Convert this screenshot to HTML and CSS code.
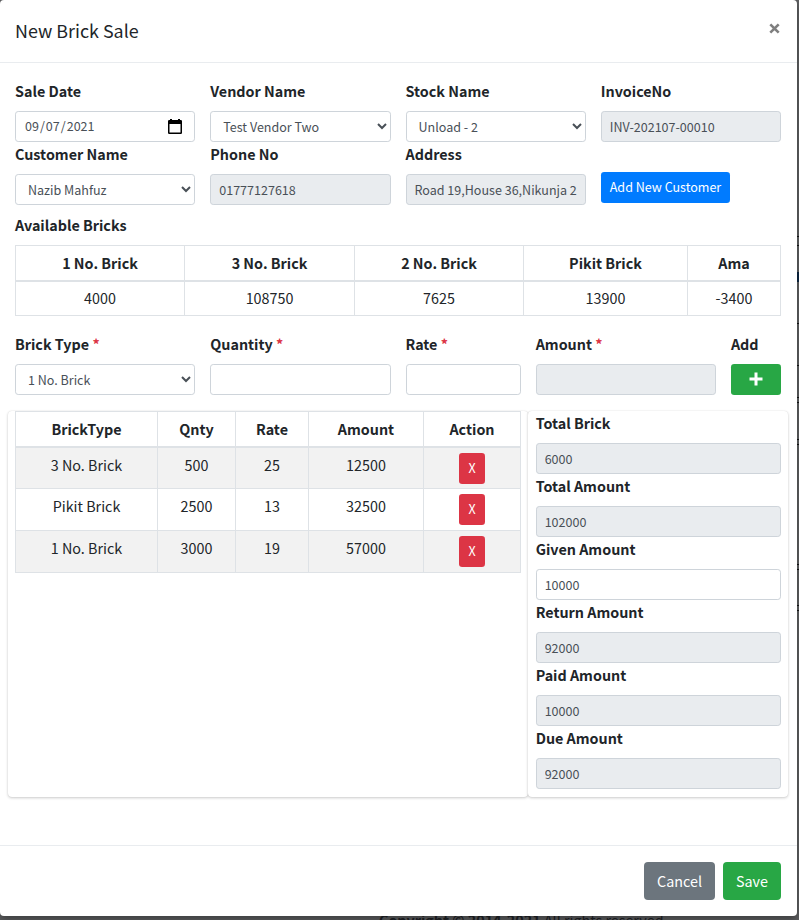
FILE: index.html
```html
<!DOCTYPE html>
<html lang="en">
<head>
<meta charset="utf-8">
<title>New Brick Sale</title>
<link rel="stylesheet" href="styles.css">
</head>
<body>
<div class="page-footer"><b>Copyright © 2014-2021</b> All rights reserved.</div>
<div class="modal">
  <header class="modal-header">
    <h4>New Brick Sale</h4>
    <button class="close" aria-label="Close"><svg width="11" height="11" viewBox="0 0 11 11"><path d="M1.3 1.3l8.4 8.4M9.7 1.3l-8.4 8.4"/></svg></button>
  </header>
  <main class="modal-body">
    <div class="row">
      <div class="c3"><label>Sale Date</label><div class="date-wrap"><input class="field date" type="date" value="2021-09-07"><svg width="14" height="15" viewBox="0 0 14 15"><path d="M0 2.2Q0 1 1.2 1H2V0h2v1h6V0h2v1h.8Q14 1 14 2.2v11.6Q14 15 12.8 15H1.2Q0 15 0 13.8zM1.5 5v8.5h11V5z" fill-rule="evenodd"/></svg></div></div>
      <div class="c3"><label>Vendor Name</label><select class="field"><option>Test Vendor Two</option></select></div>
      <div class="c3"><label>Stock Name</label><select class="field"><option>Unload - 2</option></select></div>
      <div class="c3"><label>InvoiceNo</label><input class="field" readonly value="INV-202107-00010"></div>
    </div>
    <div class="row">
      <div class="c3"><label>Customer Name</label><select class="field"><option>Nazib Mahfuz</option></select></div>
      <div class="c3"><label>Phone No</label><input class="field" readonly value="01777127618"></div>
      <div class="c3"><label>Address</label><input class="field" readonly value="Road 19,House 36,Nikunja 2"></div>
      <div class="c3"><button class="btn sm primary">Add New Customer</button></div>
    </div>
    <section class="available">
      <label>Available Bricks</label>
      <table class="stock">
        <colgroup><col class="w169"><col class="w170"><col class="w169"><col class="w164"><col></colgroup>
        <thead><tr><th>1 No. Brick</th><th>3 No. Brick</th><th>2 No. Brick</th><th>Pikit Brick</th><th>Ama</th></tr></thead>
        <tbody><tr><td>4000</td><td>108750</td><td>7625</td><td>13900</td><td>-3400</td></tr></tbody>
      </table>
    </section>
    <div class="row entry">
      <div class="c3"><label>Brick Type <i>*</i></label><select class="field"><option>1 No. Brick</option></select></div>
      <div class="c3"><label>Quantity <i>*</i></label><input class="field"></div>
      <div class="c2"><label>Rate <i>*</i></label><input class="field"></div>
      <div class="c3"><label>Amount <i>*</i></label><input class="field" readonly></div>
      <div class="c1"><label>Add</label><button class="btn sm success add" aria-label="Add"><svg width="14" height="14" viewBox="0 0 14 14"><path d="M7 .5v13M.5 7h13"/></svg></button></div>
    </div>
    <div class="row panels">
      <div class="card items">
        <table class="lines">
          <colgroup><col class="w142"><col class="w78"><col class="w73"><col class="w115"><col></colgroup>
          <thead><tr><th>BrickType</th><th>Qnty</th><th>Rate</th><th>Amount</th><th>Action</th></tr></thead>
          <tbody>
            <tr><td>3 No. Brick</td><td>500</td><td>25</td><td>12500</td><td class="act"><button class="btn sm danger">X</button></td></tr>
            <tr><td>Pikit Brick</td><td>2500</td><td>13</td><td>32500</td><td class="act"><button class="btn sm danger">X</button></td></tr>
            <tr><td>1 No. Brick</td><td>3000</td><td>19</td><td>57000</td><td class="act"><button class="btn sm danger">X</button></td></tr>
          </tbody>
        </table>
      </div>
      <div class="card totals">
        <label>Total Brick</label><input class="field" readonly value="6000">
        <label>Total Amount</label><input class="field" readonly value="102000">
        <label>Given Amount</label><input class="field" value="10000">
        <label>Return Amount</label><input class="field" readonly value="92000">
        <label>Paid Amount</label><input class="field" readonly value="10000">
        <label>Due Amount</label><input class="field" readonly value="92000">
      </div>
    </div>
  </main>
  <footer class="modal-footer">
    <button class="btn secondary">Cancel</button>
    <button class="btn success">Save</button>
  </footer>
</div>
</body>
</html>
```
FILE: styles.css
```css
* { box-sizing: border-box; }
body {
  margin: 0;
  height: 920px;
  overflow: hidden;
  position: relative;
  background:
    linear-gradient(#121314, #121314) 0 236px / 100% 1px no-repeat,
    linear-gradient(#121314, #121314) 0 245px / 100% 1px no-repeat,
    linear-gradient(#0b2540, #0b2540) 0 272px / 100% 10px no-repeat,
    linear-gradient(#121314, #121314) 0 323px / 100% 1px no-repeat,
    linear-gradient(#121314, #121314) 0 365px / 100% 1px no-repeat,
    linear-gradient(#121314, #121314) 0 397px / 100% 1px no-repeat,
    linear-gradient(#121314, #121314) 0 402px / 100% 1px no-repeat,
    linear-gradient(#121314, #121314) 0 439px / 100% 1px no-repeat,
    linear-gradient(#121314, #121314) 0 444px / 100% 1px no-repeat,
    linear-gradient(#121314, #121314) 0 564px / 100% 1px no-repeat,
    linear-gradient(#121314, #121314) 0 569px / 100% 1px no-repeat,
    linear-gradient(#121314, #121314) 0 605px / 100% 1px no-repeat,
    linear-gradient(#121314, #121314) 0 610px / 100% 1px no-repeat,
    #5e5f61;
  color: #212529;
  font: 14.33px/24px "Noto Sans CJK SC", "Noto Sans", sans-serif;
}
.page-footer {
  position: absolute;
  left: 379px;
  top: 908px;
  white-space: nowrap;
  color: #212327;
}
.modal {
  position: relative;
  width: 797px;
  height: 916px;
  background: #fff;
  border-radius: 4px;
  box-shadow: 0 4px 8px rgba(0, 0, 0, .35);
  display: flex;
  flex-direction: column;
}
.modal-header {
  height: 63px;
  padding: 15px 15px 16px;
  border-bottom: 1px solid #e9ecef;
  display: flex;
  justify-content: space-between;
}
h4 { margin: 0; font-size: 17.9px; font-weight: 400; line-height: 30px; }
.close {
  border: 0;
  padding: 0;
  background: none;
  width: 11px;
  height: 11px;
  margin: 8px 2px 0 0;
}
.close svg, .add svg { display: block; }
.close path { stroke: #7f7f7f; stroke-width: 2.6; }
.modal-body { padding: 16px 16px 0 15px; flex: 1; }
.row { display: flex; margin: 0 -7.5px; }
.c3 { width: 25%; padding: 0 7.5px; }
.c2 { width: 16.6667%; padding: 0 7.5px; }
.c1 { width: 8.3333%; padding: 0 7.5px; }
label { display: block; height: 24px; margin-bottom: 8px; font-weight: 700; white-space: nowrap; }
label i { color: #dc3545; font-style: normal; }
.field {
  display: block;
  width: 100%;
  height: 31px;
  padding: 4px 8px;
  border: 1px solid #ced4da;
  border-radius: 3.2px;
  background: #fff;
  color: #495057;
  font: 12.54px/21px "Noto Sans CJK SC", "Noto Sans", sans-serif;
}
.field[readonly] { background: #e9ecef; }
.date-wrap { position: relative; }
.date { padding: 3px 8px 5px; }
.date::-webkit-calendar-picker-indicator { opacity: 0; }
.date-wrap svg { position: absolute; right: 13px; top: 8px; pointer-events: none; }
.btn {
  border: 0;
  border-radius: 4px;
  padding: 0 13px;
  height: 38px;
  color: #fff;
  font: 14.33px/38px "Noto Sans CJK SC", "Noto Sans", sans-serif;
  white-space: nowrap;
}
.sm { height: 31px; padding: 0 9px 1px; border-radius: 3.2px; font-size: 12.54px; line-height: 30px; }
.primary { background: #007bff; margin-top: 30px; width: 129px; }
.success { background: #28a745; }
.danger { background: #dc3545; width: 26px; display: block; margin: 0 auto; }
.secondary { background: #6c757d; }
.add { width: 100%; display: grid; place-items: center; }
.add path { stroke: #fff; stroke-width: 3; }
.available { margin-top: 8px; }
table { border-collapse: collapse; table-layout: fixed; text-align: center; }
th, td { border: 1px solid #dee2e6; padding: 0; height: 35px; }
th { font-weight: 700; border-bottom-width: 2px; }
.stock { width: 766px; }
.w169 { width: 169px; } .w170 { width: 170px; } .w164 { width: 164px; }
.w142 { width: 142px; } .w78 { width: 78px; } .w73 { width: 73px; } .w115 { width: 115px; }
.entry { margin-top: 16px; }
.panels { margin-top: 16px; height: 386px; }
.card {
  border-radius: 4px;
  background: #fff;
  box-shadow: 0 0 1px rgba(0, 0, 0, .125), 0 1px 3px rgba(0, 0, 0, .2);
}
.items { width: 66.6667%; padding: 0 7.5px; }
.totals { width: 33.3333%; padding: 0 7.5px; }
.lines { width: 506px; }
.lines tbody tr:nth-child(odd) { background: #f2f2f2; }
.lines td { height: 42px; padding-bottom: 7px; }
.lines tr:first-child td { padding-bottom: 5px; }
.lines tr .act { padding: 0; }
.lines tr:first-child .act { padding: 2px 0 0; }
.modal-footer {
  height: 71px;
  padding: 16px;
  border-top: 1px solid #e9ecef;
  display: flex;
  justify-content: flex-end;
  gap: 8px;
}
.modal-footer .secondary { width: 71px; }
.modal-footer .success { width: 58px; }
```
